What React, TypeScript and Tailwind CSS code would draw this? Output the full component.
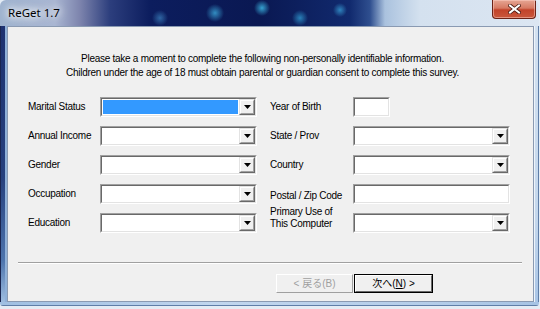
import React from "react";

/* ReGet 1.7 — survey page of the registration wizard (Win7 Aero frame) */

const ui = "font-['Liberation_Sans','Noto_Sans_CJK_JP',sans-serif]";

function Combo({ selected = false }: { selected?: boolean }) {
  return (
    <div className="h-[20px] w-[157px] border border-t-[#a0a0a0] border-l-[#a0a0a0] border-b-white border-r-white">
      <div className="flex h-full border border-t-[#696969] border-l-[#696969] border-b-[#e3e3e3] border-r-[#e3e3e3] bg-white">
        <div className="flex-1 p-[1px]">
          {selected && <div className="h-full bg-[#3399ff]" />}
        </div>
        {/* drop button */}
        <div className="w-[16px] border border-t-[#e3e3e3] border-l-[#e3e3e3] border-b-[#696969] border-r-[#696969]">
          <div className="flex h-full items-center justify-center border border-t-white border-l-white border-b-[#a0a0a0] border-r-[#a0a0a0] bg-[#f0f0f0]">
            <svg width="7" height="4" viewBox="0 0 7 4">
              <path d="M0 0h7L3.5 4z" fill="#000" />
            </svg>
          </div>
        </div>
      </div>
    </div>
  );
}

function TextBox({ w }: { w: string }) {
  return (
    <div className={`h-[20px] ${w} border border-t-[#a0a0a0] border-l-[#a0a0a0] border-b-white border-r-white`}>
      <div className="h-full border border-t-[#696969] border-l-[#696969] border-b-[#e3e3e3] border-r-[#e3e3e3] bg-white" />
    </div>
  );
}

function Label({ children, cls = "" }: { children: React.ReactNode; cls?: string }) {
  return <div className={`self-center text-[10px] leading-[12px] tracking-[-0.27px] text-black ${cls}`}>{children}</div>;
}

export default function App() {
  return (
    <div className={`h-[309px] w-[540px] overflow-hidden bg-[#e4ecf5] ${ui}`}>
      <div className="flex h-[306px] w-[539px] flex-col overflow-hidden rounded-t-[6px] rounded-b-[3px]">
        {/* ── title bar ── */}
        <div className="flex h-[26px] shrink-0 items-start bg-[radial-gradient(circle_at_215px_13px,rgba(60,170,220,0.8)_0,transparent_9px),radial-gradient(circle_at_262px_8px,rgba(60,185,230,0.85)_0,transparent_8px),radial-gradient(circle_at_300px_18px,rgba(50,160,215,0.75)_0,transparent_8px),radial-gradient(circle_at_340px_10px,rgba(60,170,225,0.7)_0,transparent_7px),radial-gradient(circle_at_160px_18px,rgba(70,150,210,0.6)_0,transparent_8px),linear-gradient(90deg,#9eb3cf_0,#a9b6d2_55px,#7d84ad_80px,#2c3e7d_110px,#0c1d5e_150px,#0a1852_260px,#112a6e_350px,#2f4f8f_370px,#aac2de_385px,#d4e1ef_420px,#dce6f2_100%)]">
          <div className="pl-[8px] pt-[6px] font-['Noto_Sans','Liberation_Sans',sans-serif] text-[11.5px] leading-[14px] text-black [text-shadow:0_0_6px_#fff,0_0_10px_#fff,0_0_12px_#fff]">
            ReGet 1.7
          </div>
          <div className="ml-auto mr-[3px] flex h-[19px] w-[44px] items-center justify-center rounded-b-[4px] border border-t-0 border-[#6b2317] bg-[linear-gradient(180deg,#e6a694_0,#d67a63_45%,#c2432a_55%,#c9573c_100%)] shadow-[inset_0_0_0_1px_rgba(255,210,200,0.5)]">
            <svg width="13" height="10" viewBox="0 0 13 10">
              <path d="M2 1.5l9 7M11 1.5l-9 7" stroke="#4a1a12" strokeWidth="3.6" strokeLinecap="square" />
              <path d="M2 1.5l9 7M11 1.5l-9 7" stroke="#fff" strokeWidth="2" strokeLinecap="square" />
            </svg>
          </div>
        </div>

        {/* ── frame + client ── */}
        <div className="flex min-h-0 flex-1">
          <div className="w-[7px] border-l border-l-[#1a2550] bg-[linear-gradient(180deg,#1d3170_0,#26407e_55%,#4d74ad_85%,#9ebde0_100%)] shadow-[inset_-2px_0_0_#8fb0d8]" />
          <div className="flex flex-1 flex-col border border-[#8a9ab2] bg-[#f0f0f0] text-black">
            {/* intro */}
            <div className="pr-[16px] pt-[25px] text-center text-[10px] leading-[14px] tracking-[-0.27px]">
              <p>Please take a moment to complete the following non-personally identifiable information.</p>
              <p>Children under the age of 18 must obtain parental or guardian consent to complete this survey.</p>
            </div>

            {/* form */}
            <div className="mt-[17px] grid grid-cols-[72px_157px_13px_83px_157px] grid-rows-[20px_20px_20px_20px_20px] gap-y-[9px] pl-[20px]">
              <Label>Marital Status</Label>
              <Combo selected />
              <div />
              <Label>Year of Birth</Label>
              <TextBox w="w-[37px]" />

              <Label>Annual Income</Label>
              <Combo />
              <div />
              <Label>State / Prov</Label>
              <Combo />

              <Label>Gender</Label>
              <Combo />
              <div />
              <Label>Country</Label>
              <Combo />

              <Label>Occupation</Label>
              <Combo />
              <div />
              <Label cls="mt-[4px]">Postal / Zip Code</Label>
              <TextBox w="w-[157px]" />

              <Label>Education</Label>
              <Combo />
              <div />
              <Label cls="-mt-[11px]">
                Primary Use of
                <br />
                This Computer
              </Label>
              <Combo />
            </div>

            {/* separator */}
            <div className="ml-[10px] mr-[11px] mt-[29px] h-[2px] border-t border-t-[#a0a0a0] border-b border-b-white" />

            {/* wizard buttons */}
            <div className="mt-[10px] flex justify-end pr-[100px] text-[10px]">
              <div className="h-[19px] w-[77px] border border-t-white border-l-white border-b-[#a0a0a0] border-r-[#a0a0a0]">
                <div className="flex h-full items-center justify-center bg-[#f0f0f0] text-[#a0a0a0]">
                  &lt; 戻る(B)
                </div>
              </div>
              <div className="ml-[1px] h-[19px] w-[79px] border border-black">
                <div className="flex h-full items-center justify-center border border-t-white border-l-white border-b-[#696969] border-r-[#696969] bg-[#f0f0f0]">
                  次へ(<span className="underline">N</span>) &gt;
                </div>
              </div>
            </div>
          </div>
          <div className="w-[5px] border-r border-r-[#5f7ea8] bg-[linear-gradient(180deg,#d3e1f0,#c4d7ec_70%,#a9c5e6)] shadow-[inset_1px_0_0_#eef4fb]" />
        </div>
        <div className="h-[4px] shrink-0 border-b border-b-[#5f7ea8] bg-[linear-gradient(90deg,#9fbfe2,#c1d6ee_40%,#b4cde9_80%,#a6c3e4)]" />
      </div>
    </div>
  );
}
